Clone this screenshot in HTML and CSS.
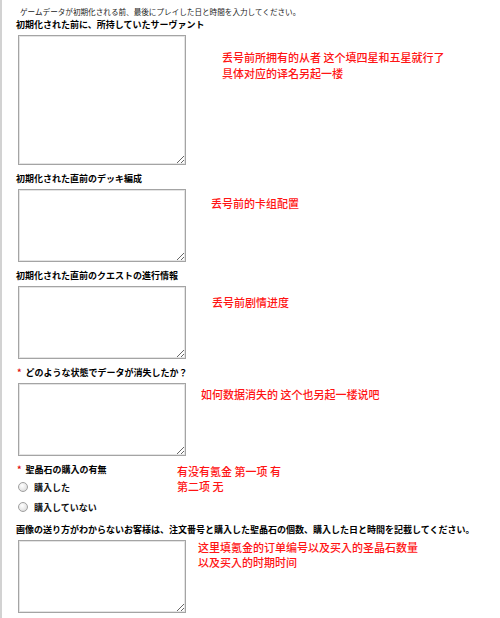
FILE: index.html
```html
<!DOCTYPE html>
<html lang="ja">
<head>
<meta charset="utf-8">
<link rel="stylesheet" href="styles.css">
</head>
<body>
<div class="page">
  <p class="intro">ゲームデータが初期化される前、最後にプレイした日と時間を入力してください。</p>

  <div class="field">
    <div class="label">初期化された前に、所持していたサーヴァント</div>
    <div class="row">
      <textarea class="box box-tall"></textarea>
      <div class="note note-1">丢号前所拥有的从者 这个填四星和五星就行了<br>具体对应的译名另起一楼</div>
    </div>
  </div>

  <div class="field">
    <div class="label">初期化された直前のデッキ編成</div>
    <div class="row">
      <textarea class="box"></textarea>
      <div class="note note-2">丢号前的卡组配置</div>
    </div>
  </div>

  <div class="field">
    <div class="label">初期化された直前のクエストの進行情報</div>
    <div class="row">
      <textarea class="box"></textarea>
      <div class="note note-3">丢号前剧情进度</div>
    </div>
  </div>

  <div class="field">
    <div class="label"><span class="req">*</span>どのような状態でデータが消失したか？</div>
    <div class="row">
      <textarea class="box"></textarea>
      <div class="note note-4">如何数据消失的 这个也另起一楼说吧</div>
    </div>
  </div>

  <div class="field">
    <div class="label-row">
      <div class="label label-fixed"><span class="req">*</span>聖晶石の購入の有無</div>
      <div class="note note-5">有没有氪金 第一项 有<br>第二项 无</div>
    </div>
    <label class="radio"><input type="radio" name="buy"><span>購入した</span></label>
    <label class="radio"><input type="radio" name="buy"><span>購入していない</span></label>
  </div>

  <div class="field field-last">
    <div class="label">画像の送り方がわからないお客様は、注文番号と購入した聖晶石の個数、購入した日と時間を記載してください。</div>
    <div class="row">
      <textarea class="box"></textarea>
      <div class="note note-6">这里填氪金的订单编号以及买入的圣晶石数量<br>以及买入的时期时间</div>
    </div>
  </div>
</div>
</body>
</html>
```
FILE: styles.css
```css
html, body {
  margin: 0;
  padding: 0;
  background: #ffffff;
}

.page {
  border-left: 2px solid #d2d2d2;
  min-height: 618px;
  box-sizing: border-box;
  padding: 6px 0 0 14px;
  font-family: "Noto Sans CJK JP", "Noto Sans", sans-serif;
  color: #111;
}

.intro {
  margin: 0 0 0 4px;
  font-size: 7.6px;
  line-height: 12px;
  color: #222;
}

.field {
  margin-top: 7px;
}

.field:first-of-type {
  margin-top: 0;
}

.label {
  font-size: 9px;
  font-weight: bold;
  line-height: 14px;
  white-space: nowrap;
  color: #000;
}

.req {
  color: #e01010;
  margin: 0 4px 0 1px;
}

.row {
  display: flex;
  align-items: flex-start;
  margin-top: 3px;
}

.box {
  display: block;
  box-sizing: border-box;
  width: 168px;
  height: 73px;
  margin: 0 0 0 2px;
  padding: 0;
  border: 1px solid #a4a4a4;
  box-shadow: inset 0 0 0 1px #e4e4e4;
  background: #fff;
  flex: none;
}

.box-tall {
  height: 130px;
}

.note {
  font-family: "Noto Sans CJK SC", sans-serif;
  font-size: 11px;
  font-weight: 500;
  line-height: 15px;
  color: #ff1414;
  white-space: nowrap;
}

.note-1 { margin: 14px 0 0 36px; line-height: 16px; }
.note-2 { margin: 7px 0 0 25px; }
.note-3 { margin: 9px 0 0 26px; }
.note-4 { margin: 4px 0 0 15px; }
.note-6 { margin: 0 0 0 12px; }

.label-row {
  display: flex;
  align-items: flex-start;
  height: 14px;
}

.label-fixed {
  width: 161px;
  flex: none;
}

.note-5 {
  margin-top: 1px;
}

.radio {
  display: flex;
  align-items: center;
  height: 20px;
  margin-left: 2px;
  font-size: 9px;
  font-weight: bold;
}

.radio input {
  appearance: none;
  -webkit-appearance: none;
  width: 10px;
  height: 10px;
  margin: 0 6px 0 0;
  border-radius: 50%;
  border: 1px solid #a0a0a0;
  background: radial-gradient(circle at 40% 35%, #ffffff 0%, #e8e8e8 55%, #cfcfcf 100%);
  box-sizing: border-box;
}

.field-last {
  margin-top: 6px;
}
```
